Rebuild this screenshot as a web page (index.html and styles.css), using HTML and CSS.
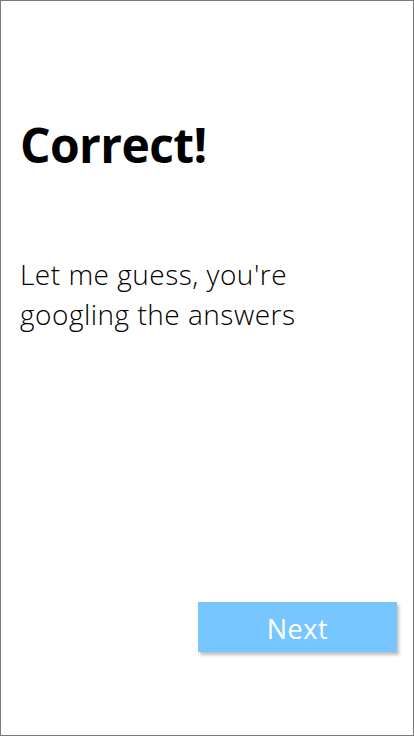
FILE: index.html
```html
<!DOCTYPE html>
<html>
<head>
<meta charset="utf-8">
<link rel="stylesheet" href="styles.css">
</head>
<body>
<div class="frame">
  <h1 class="title">Correct!</h1>
  <p class="message">Let me guess, you're googling the answers</p>
  <div class="actions">
    <button class="next">Next</button>
  </div>
</div>
</body>
</html>
```
FILE: styles.css
```css
html, body {
  margin: 0;
  padding: 0;
  background: #fff;
}
.frame {
  box-sizing: border-box;
  width: 414px;
  height: 736px;
  border: 1px solid #7a7a7a;
  display: flex;
  flex-direction: column;
  padding: 0 16px 0 19px;
  font-family: "Open Sans", "Noto Sans", sans-serif;
  color: #000;
}
.title {
  margin: 114px 0 0 0;
  font-size: 48px;
  font-weight: 700;
  line-height: 60px;
  letter-spacing: -0.6px;
}
.message {
  margin: 79px 0 0 0;
  width: 300px;
  font-size: 28px;
  font-weight: 300;
  line-height: 40px;
  letter-spacing: 0.5px;
}
.actions {
  margin-top: auto;
  margin-bottom: 83px;
  display: flex;
  justify-content: flex-end;
}
.next {
  width: 199px;
  height: 50px;
  border: none;
  background: #77c6ff;
  color: #fff;
  font-family: "Open Sans", "Noto Sans", sans-serif;
  font-size: 27px;
  font-weight: 400;
  letter-spacing: 0.6px;
  box-shadow: 2px 3px 3px rgba(0,0,0,0.25);
  padding: 3px 0 0 0;
}
```
